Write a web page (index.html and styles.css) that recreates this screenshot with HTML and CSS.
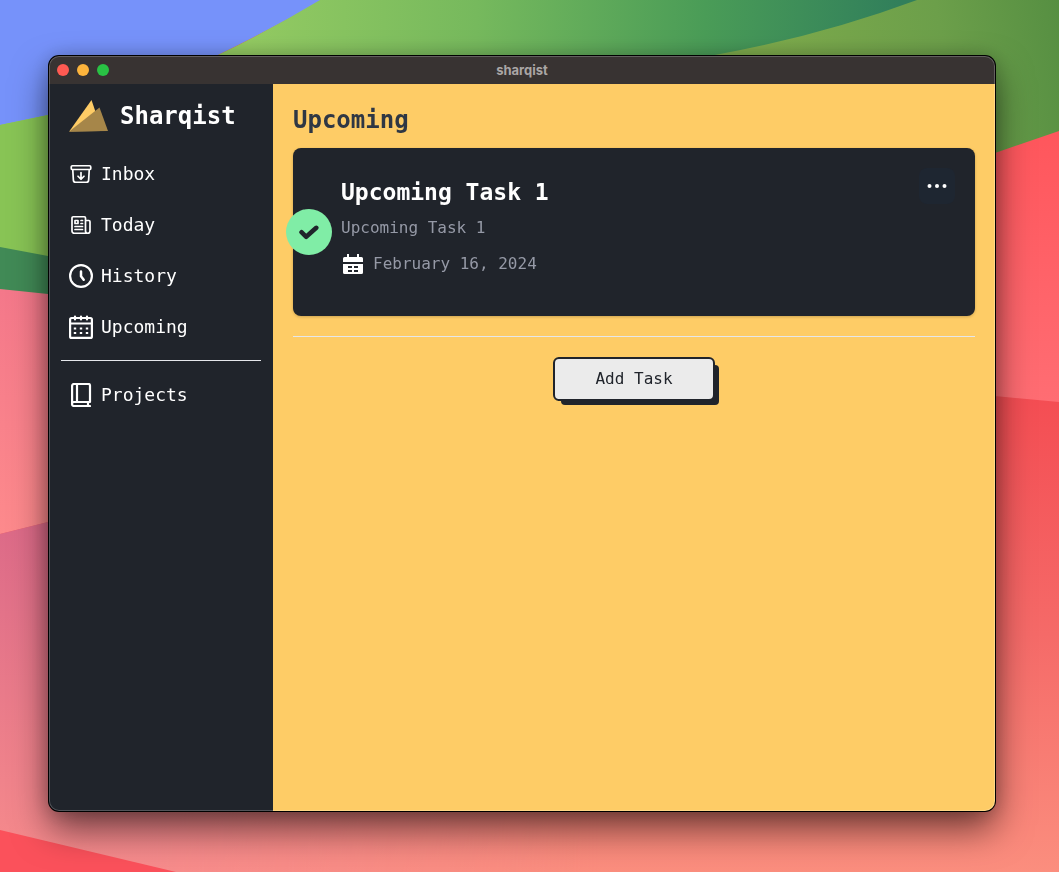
FILE: index.html
```html
<!DOCTYPE html>
<html lang="en">
<head>
<meta charset="utf-8">
<meta name="viewport" content="width=device-width, initial-scale=1">
<title>sharqist</title>
<link rel="stylesheet" href="styles.css">
</head>
<body>
<svg class="wallpaper" viewBox="0 0 1059 872" preserveAspectRatio="none" aria-hidden="true">
  <defs>
    <linearGradient id="green" gradientUnits="userSpaceOnUse" x1="250" y1="0" x2="900" y2="0">
      <stop offset="0" stop-color="#93ca62"/><stop offset=".35" stop-color="#76b95d"/><stop offset=".7" stop-color="#4a9c57"/><stop offset="1" stop-color="#317f5b"/>
    </linearGradient>
    <linearGradient id="olive" gradientUnits="userSpaceOnUse" x1="760" y1="60" x2="1059" y2="0">
      <stop offset="0" stop-color="#7eab4c"/><stop offset=".6" stop-color="#6c9f4a"/><stop offset="1" stop-color="#568f42"/>
    </linearGradient>
    <linearGradient id="coral" x1="0" y1="0" x2="0" y2="1">
      <stop offset="0" stop-color="#ff565c"/><stop offset="1" stop-color="#ff6d73"/>
    </linearGradient>
    <linearGradient id="red" gradientUnits="userSpaceOnUse" x1="0" y1="396" x2="0" y2="872">
      <stop offset="0" stop-color="#f44d53"/><stop offset=".5" stop-color="#f56a68"/><stop offset="1" stop-color="#fb8e7e"/>
    </linearGradient>
    <linearGradient id="pink" x1="0" y1="0" x2="0" y2="1">
      <stop offset="0" stop-color="#f4788a"/><stop offset="1" stop-color="#fd8a8c"/>
    </linearGradient>
    <linearGradient id="mauve" gradientUnits="userSpaceOnUse" x1="0" y1="522" x2="0" y2="872">
      <stop offset="0" stop-color="#dc6a88"/><stop offset="1" stop-color="#f78c8c"/>
    </linearGradient>
    <linearGradient id="fade" gradientUnits="userSpaceOnUse" x1="150" y1="0" x2="600" y2="0">
      <stop offset="0" stop-color="#fff"/><stop offset="1" stop-color="#000"/>
    </linearGradient>
    <mask id="fade-right" maskUnits="userSpaceOnUse" x="0" y="0" width="1059" height="872"><rect width="1059" height="872" fill="url(#fade)"/></mask>
  </defs>
  <rect width="1059" height="872" fill="url(#red)"/>
  <path d="M0 0H322Q270 30 218 55L48 116 0 126Z" fill="#7692fa"/>
  <path d="M320 0H920V180H0V125L48 115Q140 95 218 55 270 30 320 0Z" fill="url(#green)"/>
  <path d="M0 125L48 115 200 80V280H0Z" fill="#88c455"/>
  <path d="M0 247L48 256 200 280V310H0Z" fill="#418a56"/>
  <path d="M917 0H1059V180H500V110Q640 80 715 55 820 36 917 0Z" fill="url(#olive)"/>
  <path d="M1059 131L995 153 500 260V370L995 396 1059 402Z" fill="url(#coral)"/>
  <path d="M0 289L48 294 400 330V470L48 522 0 534Z" fill="url(#pink)"/>
  <path d="M0 534L48 522 600 430V872H0Z" fill="url(#mauve)" mask="url(#fade-right)"/>
  <path d="M0 830L176 872H0Z" fill="#fb515b"/>
</svg>

<div class="window">
  <header class="titlebar">
    <div class="lights"><span class="light close"></span><span class="light minimize"></span><span class="light zoom"></span></div>
    <span class="window-title">sharqist</span>
  </header>

  <div class="app">
    <aside class="sidebar">
      <div class="brand">
        <svg class="brand-mark" viewBox="0 0 39 32" aria-hidden="true">
          <path d="M.2 31.500L22.500 0 33 31Z" fill="#fecc66"/>
          <path d="M.2 31.500L30.500 7.500 39 31Z" fill="#a68649"/>
        </svg>
        <span>Sharqist</span>
      </div>
      <nav class="nav" aria-label="Main">
        <a href="#inbox">
          <svg viewBox="0 0 24 24" fill="none" stroke="currentColor" stroke-width="1.700" stroke-linecap="round" stroke-linejoin="round" aria-hidden="true"><path d="M20.250 7.500l-.625 10.632a2.250 2.250 0 0 1-2.247 2.118H6.622a2.250 2.250 0 0 1-2.247-2.118L3.750 7.500m8.250 3v6.750m0 0l-3-3m3 3l3-3M3.375 7.500h17.250c.621 0 1.125-.504 1.125-1.125v-1.500c0-.621-.504-1.125-1.125-1.125H3.375c-.621 0-1.125.504-1.125 1.125v1.500c0 .621.504 1.125 1.125 1.125z"/></svg>
          Inbox
        </a>
        <a href="#today">
          <svg viewBox="0 0 24 24" fill="none" stroke="currentColor" stroke-width="1.700" stroke-linecap="round" stroke-linejoin="round" aria-hidden="true"><path d="M12 7.500h1.500m-1.500 3h1.500m-7.500 3h7.500m-7.500 3h7.500m3-9h3.375c.621 0 1.125.504 1.125 1.125V18a2.250 2.250 0 0 1-2.250 2.250M16.500 7.500V18a2.250 2.250 0 0 0 2.250 2.250M16.500 7.500V4.875c0-.621-.504-1.125-1.125-1.125H4.125C3.504 3.750 3 4.254 3 4.875V18a2.250 2.250 0 0 0 2.250 2.250h13.500M6 7.500h3v3H6v-3z"/></svg>
          Today
        </a>
        <a href="#history">
          <svg viewBox="0 0 24 24" fill="none" stroke="currentColor" stroke-width="2.200" stroke-linecap="round" stroke-linejoin="round" aria-hidden="true"><circle cx="12" cy="12" r="10.900"/><path d="M12 7.500V12.300l2.700 3.400" stroke-width="2.500"/></svg>
          History
        </a>
        <a href="#upcoming" aria-current="page">
          <svg viewBox="0 0 24 24" fill="none" stroke="currentColor" stroke-width="2.200" stroke-linecap="round" stroke-linejoin="round" aria-hidden="true"><rect x="1.100" y="3" width="21.800" height="19.900" rx="1.500"/><path d="M1 8.500h22M6 1.500v3M12 1.500v3M18 1.500v3"/><path d="M4.800 13.500h2.400m3.600 0h2.400m3.600 0h2.400M4.800 18h2.400m3.600 0h2.400m3.600 0h2.400" stroke-linecap="butt"/></svg>
          Upcoming
        </a>
        <hr>
        <a href="#projects">
          <svg viewBox="0 0 24 24" fill="none" stroke="currentColor" stroke-width="2.200" stroke-linecap="round" stroke-linejoin="round" aria-hidden="true"><path d="M21 19H5a2 2 0 0 0 0 4h16M3.100 21V3a2 2 0 0 1 2-2H19.500a1.500 1.500 0 0 1 1.500 1.500V19M8 1v18M19 19v4"/></svg>
          Projects
        </a>
      </nav>
    </aside>

    <main class="content">
      <h1>Upcoming</h1>
      <article class="task">
        <button class="done" type="button" aria-label="Mark as done">
          <svg viewBox="0 0 24 24" fill="none" stroke="currentColor" stroke-width="4.500" stroke-linecap="round" stroke-linejoin="round" aria-hidden="true"><path d="M4.500 12.200L9.200 16.800 19.300 7.800"/></svg>
        </button>
        <div class="task-body">
          <h2>Upcoming Task 1</h2>
          <p>Upcoming Task 1</p>
          <div class="due">
            <svg viewBox="0 0 24 24" fill="currentColor" aria-hidden="true"><path d="M6 2h2v3h8V2h2v3h2.500A1.500 1.500 0 0 1 22 6.500V10H2V6.500A1.500 1.500 0 0 1 3.500 5H6Z"/><path fill-rule="evenodd" d="M2 12h20v8.500a1.500 1.500 0 0 1-1.500 1.500h-17A1.500 1.500 0 0 1 2 20.500ZM7 14v2h4v-2Zm6 0v2h4v-2Zm-6 4v2h4v-2Zm6 0v2h4v-2Z"/></svg>
            <time datetime="2024-02-16">February 16, 2024</time>
          </div>
        </div>
        <button class="more" type="button" aria-label="Task options">
          <svg viewBox="0 0 24 24" fill="currentColor" aria-hidden="true"><circle cx="4.500" cy="12" r="2"/><circle cx="12" cy="12" r="2"/><circle cx="19.500" cy="12" r="2"/></svg>
        </button>
      </article>
      <hr>
      <button class="add" type="button">Add Task</button>
    </main>
  </div>
</div>
</body>
</html>
```
FILE: styles.css
```css
* {
  box-sizing: border-box;
}

body {
  margin: 0;
  min-height: 100vh;
  padding: 56px 64px 61px 49px;
  display: flex;
  font-family: "DejaVu Sans Mono", Menlo, monospace;
  font-size: 16px;
  line-height: 24px;
}

h1, h2, p {
  margin: 0;
}

hr {
  width: 100%;
  height: 1px;
  margin: 0;
  border: 0;
  background: #e5e7eb;
}

button {
  font: inherit;
  cursor: pointer;
}

.wallpaper {
  position: fixed;
  inset: 0;
  z-index: -1;
  width: 100%;
  height: 100%;
}

.window {
  position: relative;
  flex: 1;
  display: flex;
  flex-direction: column;
  border-radius: 10px;
  overflow: hidden;
  background: #20242b;
  box-shadow: 0 0 0 1px #000, 0 18px 36px rgba(0, 0, 0, .55), 0 0 20px rgba(0, 0, 0, .2);
}

/* Light rim along the window edge */
.window::after {
  content: "";
  position: absolute;
  inset: 0;
  border-radius: inherit;
  box-shadow: inset 0 0 0 1px rgba(255, 255, 255, .22);
  pointer-events: none;
}

.titlebar {
  display: grid;
  grid-template-columns: 1fr auto 1fr;
  align-items: center;
  height: 28px;
  padding: 0 8px;
  background: #383332;
}

.lights {
  display: flex;
  gap: 8px;
}

.light {
  width: 12px;
  height: 12px;
  border-radius: 50%;
}

.close { background: #ff5a52; }
.minimize { background: #fdb43c; }
.zoom { background: #29c244; }

.window-title {
  font: bold 13px/16px Inter, sans-serif;
  color: #aaa6a5;
}

.app {
  flex: 1;
  display: flex;
}

.sidebar {
  flex: 0 0 224px;
  padding: 0 12px;
  background: #20242b;
  color: #fff;
}

.brand {
  display: flex;
  align-items: center;
  gap: 12px;
  height: 64px;
  padding: 0 8px;
  font-size: 24px;
  font-weight: bold;
}

.brand-mark {
  width: 39px;
  height: 32px;
}

.nav a {
  display: flex;
  align-items: center;
  gap: 8px;
  height: 51px;
  padding: 0 8px;
  color: inherit;
  font-size: 18px;
  font-weight: 500;
  text-decoration: none;
}

.nav svg {
  width: 24px;
  height: 24px;
}

.nav hr {
  margin: 8px 0;
}

.content {
  flex: 1;
  display: flex;
  flex-direction: column;
  gap: 20px;
  padding: 20px;
  background: #fecc66;
}

h1 {
  margin-bottom: -8px;
  color: #2f3744;
  font-size: 24px;
  line-height: 32px;
}

.task {
  position: relative;
  display: flex;
  align-items: flex-start;
  padding: 20px 20px 20px 48px;
  border-radius: 8px;
  background: #20242b;
  color: #9599a6;
  box-shadow: 0 1px 3px rgba(0, 0, 0, .2);
}

.task-body {
  flex: 1;
  padding: 8px 0 20px;
}

.task h2 {
  margin-bottom: 8px;
  color: #fff;
  font-size: 23px;
  line-height: 32px;
}

.due {
  display: flex;
  gap: 8px;
  margin-top: 12px;
}

.due svg {
  width: 24px;
  height: 24px;
  color: #fff;
}

.done {
  position: absolute;
  top: 50%;
  left: -7px;
  display: grid;
  place-items: center;
  width: 46px;
  height: 46px;
  margin-top: -23px;
  padding: 0;
  border: 0;
  border-radius: 50%;
  background: #80eda6;
  color: #20242b;
}

.done svg {
  width: 24px;
  height: 24px;
}

.more {
  display: grid;
  place-items: center;
  width: 36px;
  height: 36px;
  padding: 0;
  border: 0;
  border-radius: 8px;
  background: #1e2631;
  color: #fff;
}

.more svg {
  width: 24px;
  height: 24px;
}

.add {
  align-self: center;
  height: 44px;
  padding: 0 40px;
  border: 2px solid #20242b;
  border-radius: 6px;
  background: #ebebeb;
  color: #20242b;
  box-shadow: 6px 6px 0 -2px #20242b;
}
```
